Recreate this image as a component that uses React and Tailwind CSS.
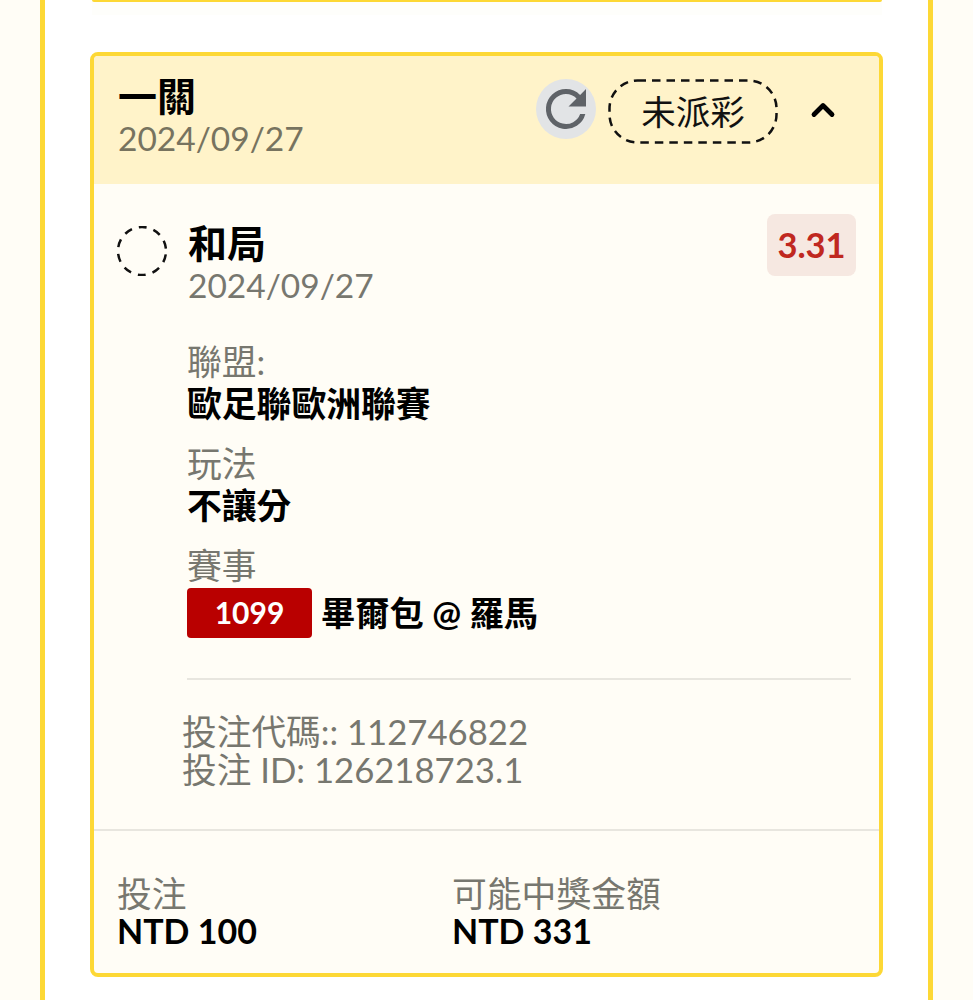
import React from 'react';
import { ChevronUp } from 'lucide-react';

const cjk = { fontFamily: 'Lato, "Noto Sans CJK TC", sans-serif' };

function Field({ label, value }) {
  return (
    <div className="flex flex-col">
      <span className="text-[34.8px] leading-[43px] text-[#77776f]">{label}</span>
      <span className="text-[34.8px] leading-[42px] font-bold text-black">{value}</span>
    </div>
  );
}

function App() {
  return (
    <div style={cjk} className="h-[1000px] w-[973px] overflow-hidden bg-[#fffdf6] px-10">
      <div className="h-[1000px] w-[893px] border-x-[5px] border-[#fdd835] bg-white px-[45px]">
        {/* bottom edge of the previous card */}
        <div className="ml-[2px] h-[2px] w-[790px] rounded-b-lg bg-[#fdd835]" />
        <div className="ml-[2px] h-[13px] w-[790px] bg-[#fefefb]" />

        <div className="mt-[37px] flex h-[925px] w-[793px] flex-col overflow-hidden rounded-lg border-4 border-[#fdd835] bg-[#fffdf6]">
          {/* Header */}
          <div className="flex h-[128px] items-start justify-between bg-[#fff3c9] pl-6 pr-[38px]">
            <div className="flex flex-col pt-[19px]">
              <span className="text-[39px] leading-[43px] font-bold text-black">一關</span>
              <span className="text-[33.5px] leading-[40px] text-[#77735f]">2024/09/27</span>
            </div>
            <div className="flex items-start pt-[23px]">
              <div className="flex h-[60px] w-[60px] items-center justify-center rounded-full bg-[#e2e4e6]">
                <svg width="60" height="60" viewBox="0 0 24 24" fill="#5f6368">
                  <path d="M17.65 6.35A7.96 7.96 0 0 0 12 4a8 8 0 1 0 7.73 10h-2.08A6 6 0 1 1 12 6c1.66 0 3.14.69 4.22 1.78L13 11h7V4l-2.35 2.35z" />
                </svg>
              </div>
              <div className="relative ml-[12px] flex h-[66px] w-[170px] items-center justify-center text-[34.5px] text-[#111]">
                未派彩
                <svg className="absolute inset-0" width="170" height="66" viewBox="0 0 170 66" fill="none">
                  <rect x="1.5" y="1.5" width="167" height="62" rx="28" stroke="#111" strokeWidth="2.5" strokeDasharray="8.5 6" />
                </svg>
              </div>
              <ChevronUp className="ml-[27px] mt-[13px] h-[36px] w-[36px] text-black" strokeWidth={3.2} />
            </div>
          </div>

          {/* Selection */}
          <div className="flex flex-1 flex-col">
            <div className="flex justify-between pl-[23px] pr-[23px] pt-[30px]">
              <div className="flex">
                <svg className="mt-[12px]" width="50" height="50" viewBox="0 0 50 50" fill="none">
                  <circle cx="25" cy="25" r="24" stroke="#111" strokeWidth="2.5" strokeDasharray="8 7.08" strokeDashoffset="11.54" />
                </svg>
                <div className="ml-[21px] mt-[8px] flex flex-col">
                  <span className="text-[39px] leading-[43px] font-bold text-black">和局</span>
                  <span className="text-[33.5px] leading-[40px] text-[#77776f]">2024/09/27</span>
                </div>
              </div>
              <div className="flex h-[62px] w-[89px] items-center justify-center rounded-lg bg-[#f6e8e1] text-[34.5px] font-bold text-[#c0281f]">
                3.31
              </div>
            </div>

            <div className="ml-[93px] mr-[28px] mt-[35px] flex flex-col gap-[17px]">
              <Field label="聯盟:" value="歐足聯歐洲聯賽" />
              <Field label="玩法" value="不讓分" />
              <div className="flex flex-col">
                <span className="text-[34.8px] leading-[43px] text-[#77776f]">賽事</span>
                <div className="flex items-center">
                  <span className="flex h-[50px] w-[125px] items-center justify-center rounded bg-[#b90000] text-[30px] font-bold text-white">1099</span>
                  <span className="ml-[9px] text-[34.3px] font-bold text-black">畢爾包 @ 羅馬</span>
                </div>
              </div>
              <div className="mt-[23px] h-[2px] bg-[#e8e6df]" />
            </div>

            <div className="ml-[88px] mt-[33px] flex flex-col text-[34.7px] leading-[38px] text-[#77776f]">
              <span>投注代碼:: 112746822</span>
              <span>投注 ID: 126218723.1</span>
            </div>

            <div className="mt-[40px] h-[2px] bg-[#e8e6df]" />

            <div className="flex pl-[23px] pt-[44px]">
              <div className="flex w-[335px] flex-col">
                <span className="text-[34.8px] leading-[37px] text-[#77776f]">投注</span>
                <span className="text-[34px] leading-[38px] font-bold text-black">NTD 100</span>
              </div>
              <div className="flex flex-col">
                <span className="text-[34.8px] leading-[37px] text-[#77776f]">可能中獎金額</span>
                <span className="text-[34px] leading-[38px] font-bold text-black">NTD 331</span>
              </div>
            </div>
          </div>
        </div>
      </div>
    </div>
  );
}

export default App;
